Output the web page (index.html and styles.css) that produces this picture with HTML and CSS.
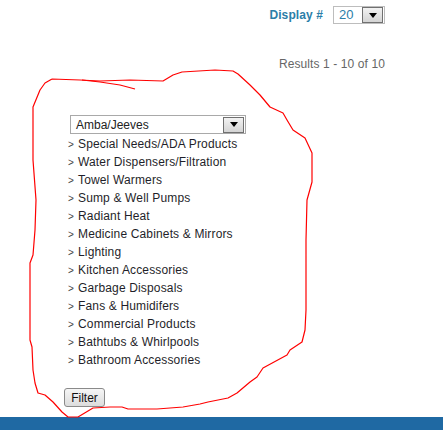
FILE: index.html
```html
<!DOCTYPE html>
<html lang="en">
<head>
    <meta charset="UTF-8">
    <title>Products</title>
    <link rel="stylesheet" href="styles.css">
</head>
<body>
    <div class="page">
        <div class="display-row">
            <span class="display-label">Display #</span>
            <div class="fake-select small">
                <span class="value">20</span>
                <span class="drop"><span class="tri"></span></span>
            </div>
        </div>
        <div class="results">Results 1 - 10 of 10</div>

        <div class="filter">
            <div class="fake-select brand">
                <span class="value">Amba/Jeeves</span>
                <span class="drop"><span class="tri"></span></span>
            </div>
            <ul class="cats">
                <li><span class="gt">&gt;</span>Special Needs/ADA Products</li>
                <li><span class="gt">&gt;</span>Water Dispensers/Filtration</li>
                <li><span class="gt">&gt;</span>Towel Warmers</li>
                <li><span class="gt">&gt;</span>Sump &amp; Well Pumps</li>
                <li><span class="gt">&gt;</span>Radiant Heat</li>
                <li><span class="gt">&gt;</span>Medicine Cabinets &amp; Mirrors</li>
                <li><span class="gt">&gt;</span>Lighting</li>
                <li><span class="gt">&gt;</span>Kitchen Accessories</li>
                <li><span class="gt">&gt;</span>Garbage Disposals</li>
                <li><span class="gt">&gt;</span>Fans &amp; Humidifers</li>
                <li><span class="gt">&gt;</span>Commercial Products</li>
                <li><span class="gt">&gt;</span>Bathtubs &amp; Whirlpools</li>
                <li><span class="gt">&gt;</span>Bathroom Accessories</li>
            </ul>
            <button class="btn">Filter</button>
        </div>
    </div>
    <div class="footer-bar"></div>

    <!-- hand drawn marker circle over the filter -->
    <svg class="scribble" width="443" height="430" viewBox="0 0 443 430">
        <polyline points="52,79 80,80 100,81 130,80 163,81 173,75 182,72 215,70 233,71 238,74 250,85 260,95 270,107 283,113 287,120 293,130 305,138 312,153 312,182 307,200 306,240 306,310 305,330 302,342 290,350 287,355 263,368 257,377 250,382 237,393 228,398 208,402 200,404 183,407 157,409 128,409 122,407 110,407 93,408 78,417 68,417 62,412 53,402 45,395 38,393 35,383 33,370 32,347 30,340 30,263 33,255 35,230 36,200 33,160 33,107 40,90 45,83 52,79"/>
        <polyline points="82,80 100,82 120,85 135,89"/>
    </svg>
</body>
</html>
```

FILE: styles.css
```css
body {
    margin: 0;
    font-family: "Liberation Sans", Arial, sans-serif;
    font-size: 12px;
    color: #222;
    background: #fff;
    width: 443px;
    height: 430px;
    overflow: hidden;
    position: relative;
}
.page {
    height: 417px;
    padding-right: 58px;
}
.display-row {
    display: flex;
    justify-content: flex-end;
    align-items: center;
    gap: 10px;
    padding-top: 6px;
}
.display-label {
    color: #2b7ea8;
    font-weight: bold;
    letter-spacing: 0.1px;
}
.fake-select {
    display: flex;
    align-items: center;
    border: 1px solid #bdbdbd;
    box-sizing: border-box;
    height: 18px;
    background: #fff;
}
.fake-select .value {
    flex: 1;
    padding-left: 5px;
    line-height: 16px;
}
.fake-select.small {
    width: 52px;
}
.fake-select.small .value {
    color: #2b7ea8;
    font-size: 13px;
}
.fake-select.brand {
    width: 176px;
    height: 19px;
    border-color: #a9a9a9;
    font-size: 12px;
}
.drop {
    width: 19px;
    height: 14px;
    margin-right: 1px;
    border: 1px solid #707070;
    background: linear-gradient(#f2f2f2, #d4d4d4);
    display: flex;
    align-items: center;
    justify-content: center;
}
.tri {
    width: 0;
    height: 0;
    border-left: 4px solid transparent;
    border-right: 4px solid transparent;
    border-top: 5px solid #000;
}
.results {
    text-align: right;
    color: #666;
    margin-top: 33px;
    line-height: 14px;
    letter-spacing: 0.1px;
}
.filter {
    padding-top: 44px;
    padding-left: 68px;
}
.brand {
    margin-left: 2px;
}
.cats {
    list-style: none;
    margin: 1px 0 0;
    padding: 0;
    letter-spacing: 0.15px;
}
.cats li {
    line-height: 18px;
    height: 18px;
    color: #1f1f2a;
}
.gt {
    font-size: 10px;
    color: #444;
    margin-right: 4px;
}
.btn {
    margin-top: 19px;
    margin-left: -4px;
    height: 19px;
    width: 41px;
    padding: 0;
    font-family: "Liberation Sans", Arial, sans-serif;
    font-size: 12px;
    color: #111;
    border: 1px solid #8a8a8a;
    border-radius: 3px;
    background: linear-gradient(#f6f6f6, #dcdcdc);
}
.footer-bar {
    height: 13px;
    background: #1f69a3;
}
.scribble {
    position: absolute;
    left: 0;
    top: 0;
    pointer-events: none;
}
.scribble polyline {
    fill: none;
    stroke: #f00;
    stroke-width: 1.2;
    stroke-linejoin: round;
}
```
